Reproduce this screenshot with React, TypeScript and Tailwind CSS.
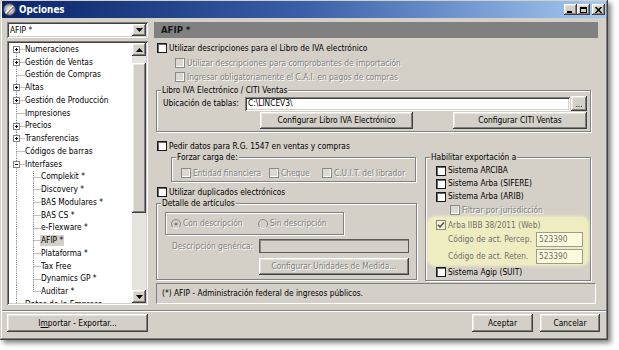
import clsx from 'clsx';
import type { ReactNode } from 'react';

const RAISED = 'shadow-[inset_-1px_-1px_#404040,inset_1px_1px_#ffffff,inset_-2px_-2px_#808080,inset_2px_2px_#e8e6e0]';
const SUNKEN = 'shadow-[inset_1px_1px_#808080,inset_-1px_-1px_#ffffff,inset_2px_2px_#404040,inset_-2px_-2px_#d4d0c8]';
const ETCHED = 'border border-[#808080] shadow-[inset_1px_1px_#ffffff,1px_1px_#ffffff]';
const DIS = 'text-[#808080] [text-shadow:1px_1px_0_#ffffff]';

const TREE: { t: string; l: number; b?: '+' | '-'; last?: boolean; sel?: boolean }[] = [
  { t: 'Numeraciones', l: 0, b: '+' },
  { t: 'Gestión de Ventas', l: 0, b: '+' },
  { t: 'Gestión de Compras', l: 0 },
  { t: 'Altas', l: 0, b: '+' },
  { t: 'Gestión de Producción', l: 0, b: '+' },
  { t: 'Impresiones', l: 0 },
  { t: 'Precios', l: 0, b: '+' },
  { t: 'Transferencias', l: 0, b: '+' },
  { t: 'Códigos de barras', l: 0 },
  { t: 'Interfases', l: 0, b: '-' },
  { t: 'Complekit *', l: 1 },
  { t: 'Discovery *', l: 1 },
  { t: 'BAS Modulares *', l: 1 },
  { t: 'BAS CS *', l: 1 },
  { t: 'e-Flexware *', l: 1 },
  { t: 'AFIP *', l: 1, sel: true },
  { t: 'Plataforma *', l: 1 },
  { t: 'Tax Free', l: 1 },
  { t: 'Dynamics GP *', l: 1 },
  { t: 'Auditar *', l: 1, last: true },
  { t: 'Datos de la Empresa', l: 0 },
];

const RH = 12.75;

function TreeCell({ cx, top, bottom, horiz, box }: { cx: number; top?: boolean; bottom?: boolean; horiz?: boolean; box?: '+' | '-' }) {
  const cy = 6.5;
  const dot = { stroke: '#808080', strokeWidth: 1, strokeDasharray: '1 1' };
  return (
    <svg width="16" height={RH} viewBox={`0 0 16 ${RH}`} className="shrink-0">
      {top && <line x1={cx} y1={0} x2={cx} y2={cy} {...dot} />}
      {bottom && <line x1={cx} y1={cy} x2={cx} y2={RH} {...dot} />}
      {horiz && <line x1={cx} y1={cy} x2={16} y2={cy} {...dot} />}
      {box && (
        <>
          <rect x={cx - 3} y={cy - 3} width={6} height={6} fill="#ffffff" stroke="#808080" />
          <line x1={cx - 1.5} y1={cy} x2={cx + 1.5} y2={cy} stroke="#000" />
          {box === '+' && <line x1={cx} y1={cy - 1.5} x2={cx} y2={cy + 1.5} stroke="#000" />}
        </>
      )}
    </svg>
  );
}

function Box({ disabled, checked, yellow }: { disabled?: boolean; checked?: boolean; yellow?: boolean }) {
  return (
    <span
      className={clsx(
        'w-[10px] h-[10px] shrink-0 flex items-center justify-center border',
        yellow
          ? 'border-[#8a8a80] bg-[#f4f3d6]'
          : disabled
            ? 'border-[#8a8a8a] bg-[#dcd9d2] shadow-[inset_-1px_-1px_#ffffff]'
            : 'border-[#1a1a1a] bg-white shadow-[inset_1px_1px_#6a6a6a]',
      )}
    >
      {checked && (
        <svg width="8" height="8" viewBox="0 0 8 8">
          <path d="M1 3.8 L3 6 L7 1.5" fill="none" stroke="#4a4a4a" strokeWidth="1.4" />
        </svg>
      )}
    </span>
  );
}

function Check({ label, disabled, checked, className, textClass, yellow }: { label: string; disabled?: boolean; checked?: boolean; className?: string; textClass?: string; yellow?: boolean }) {
  return (
    <div className={clsx('flex items-center', className)}>
      <Box disabled={disabled} checked={checked} yellow={yellow} />
      <span className={clsx('ml-[2px] whitespace-nowrap', textClass ?? (disabled ? DIS : 'text-black'))}>{label}</span>
    </div>
  );
}

function Radio({ label, on, className }: { label: string; on?: boolean; className?: string }) {
  return (
    <div className={clsx('flex items-center', className)}>
      <svg width="10" height="10" viewBox="0 0 10 10" className="shrink-0">
        <circle cx="5" cy="5" r="4.5" fill="#d4d0c8" stroke="#8a8a8a" />
        <path d="M1.8 8.2 A4.5 4.5 0 0 0 8.2 8.2" stroke="#ffffff" fill="none" />
        {on && <circle cx="5" cy="5" r="1.6" fill="#808080" />}
      </svg>
      <span className={clsx('ml-[2px] whitespace-nowrap', DIS)}>{label}</span>
    </div>
  );
}

function Btn({ children, className, disabled }: { children: ReactNode; className?: string; disabled?: boolean }) {
  return (
    <button type="button" className={clsx('flex items-center justify-center bg-[#d4d0c8] whitespace-nowrap', RAISED, disabled ? DIS : 'text-black', className)}>
      {children}
    </button>
  );
}

function Group({ label, className, children }: { label: string; className?: string; children?: ReactNode }) {
  return (
    <div className={clsx('relative box-border', ETCHED, className)}>
      <span className="absolute -top-[6px] left-[4px] px-[1px] bg-[#d4d0c8] leading-[11px] whitespace-nowrap text-black">{label}</span>
      {children}
    </div>
  );
}

function ScrollBtn({ up }: { up?: boolean }) {
  return (
    <div className={clsx('h-[13px] w-[14px] bg-[#d4d0c8] flex items-center justify-center shrink-0', RAISED)}>
      <svg width="7" height="4" viewBox="0 0 7 4">
        <path d={up ? 'M0 4 L3.5 0 L7 4 Z' : 'M0 0 L7 0 L3.5 4 Z'} fill="#000" />
      </svg>
    </div>
  );
}

function TitleBar() {
  return (
    <div className="h-[17px] bg-linear-to-r from-[#0a246a] via-[#3a5fa8] to-[#a6caf0] flex items-center pl-[1px] pr-[1px]">
      <svg width="13" height="13" viewBox="0 0 13 13" className="shrink-0">
        <circle cx="6.5" cy="6.5" r="5.8" fill="#a8a8a8" stroke="#4c4c4c" />
        <circle cx="6.5" cy="6.5" r="3.2" fill="#d8d8d8" />
        <path d="M2.5 10.5 L10 3" stroke="#ffffff" strokeWidth="1.6" />
        <path d="M3.5 11 L10.5 4" stroke="#3a3a3a" strokeWidth="0.8" />
      </svg>
      <span className="ml-[3px] text-white font-bold text-[9.8px]">Opciones</span>
      <div className="ml-auto flex items-center">
        <div className={clsx('w-[13px] h-[11px] bg-[#d4d0c8] flex items-end justify-start pl-[3px] pb-[2px]', RAISED)}>
          <span className="w-[5px] h-[2px] bg-black" />
        </div>
        <div className={clsx('w-[13px] h-[11px] bg-[#d4d0c8] flex items-center justify-center', RAISED)}>
          <span className="w-[7px] h-[6px] border border-black border-t-2" />
        </div>
        <div className={clsx('ml-[2px] w-[13px] h-[11px] bg-[#d4d0c8] flex items-center justify-center', RAISED)}>
          <svg width="7" height="6" viewBox="0 0 7 6">
            <path d="M0.5 0 L6.5 6 M6.5 0 L0.5 6" stroke="#000" strokeWidth="1.5" />
          </svg>
        </div>
      </div>
    </div>
  );
}

function LeftPane() {
  return (
    <div className="w-[141px] ml-[5px] flex flex-col shrink-0">
      <div className={clsx('h-[16px] bg-white flex items-center pl-[3px] pr-[2px]', SUNKEN)}>
        <span className="text-black">AFIP *</span>
        <div className={clsx('ml-auto w-[14px] h-[12px] bg-[#d4d0c8] flex items-center justify-center', RAISED)}>
          <svg width="7" height="4" viewBox="0 0 7 4">
            <path d="M0 0 L7 0 L3.5 4 Z" fill="#000" />
          </svg>
        </div>
      </div>
      <div className={clsx('mt-[3px] h-[264px] p-[2px] flex bg-white', SUNKEN)}>
        <div className="flex-1 overflow-hidden">
          {TREE.map((n, i) => (
            <div key={n.t} className="flex items-center" style={{ height: RH }}>
              {n.l === 0 ? (
                <TreeCell cx={7.5} top={i > 0} bottom horiz box={n.b} />
              ) : (
                <>
                  <TreeCell cx={7.5} top bottom />
                  <TreeCell cx={8.5} top bottom={!n.last} horiz />
                </>
              )}
              <span className={clsx('whitespace-nowrap text-black leading-[11px]', n.sel && 'bg-[#d4d0c8] px-[1px] -ml-[1px]')}>{n.t}</span>
            </div>
          ))}
        </div>
        <div className="w-[14px] flex flex-col bg-[#e6e4de]">
          <ScrollBtn up />
          <div className="flex-1">
            <div className={clsx('mt-[7px] h-[150px] bg-[#d4d0c8]', RAISED)} />
          </div>
          <ScrollBtn />
        </div>
      </div>
    </div>
  );
}

function RightPane() {
  const yText = 'text-[#707068]';
  return (
    <div className="w-[444px] ml-[6px] flex flex-col shrink-0">
      <div className="h-[16px] bg-[#808080] flex items-center pl-[7px]">
        <span className="font-bold text-[9.5px] text-[#161616]">AFIP *</span>
      </div>

      <Check className="mt-[3px] ml-[3px] h-[14px]" label="Utilizar descripciones para el Libro de IVA electrónico" />
      <Check className="mt-[1px] ml-[21px] h-[14px]" disabled label="Utilizar descripciones para comprobantes de importación" />
      <Check className="ml-[21px] h-[14px]" disabled label="Ingresar obligatoriamente el C.A.I. en pagos de compras" />

      <Group label="Libro IVA Electrónico / CITI Ventas" className="mt-[6px] ml-[2px] w-[435px] h-[42px] pt-[5px]">
        <div className="flex items-center h-[15px]">
          <span className="w-[88px] pl-[6px] shrink-0 whitespace-nowrap">Ubicación de tablas:</span>
          <div className={clsx('w-[325px] h-[14px] bg-white flex items-center pl-[3px]', SUNKEN)}>C:\LINCEV3\</div>
          <Btn className="ml-[1px] w-[16px] h-[15px] items-end pb-[3px]">...</Btn>
        </div>
        <div className="flex mt-[1px] h-[17px] pl-[103px]">
          <Btn className="w-[153px] h-[17px]">Configurar Libro IVA Electrónico</Btn>
          <Btn className="ml-[40px] w-[134px] h-[17px]">Configurar CITI Ventas</Btn>
        </div>
      </Group>

      <Check className="mt-[7px] ml-[3px] h-[14px]" label="Pedir datos para R.G. 1547 en ventas y compras" />

      <div className="flex mt-[4px] h-[124px]">
        <div className="w-[262px] ml-[2px] flex flex-col shrink-0">
          <Group label="Forzar carga de:" className="ml-[15px] w-[245px] h-[25px] pt-[8px] pl-[9px]">
            <div className="flex items-center h-[14px]">
              <Check className="w-[88px] shrink-0" disabled label="Entidad financiera" />
              <Check className="w-[53px] shrink-0" disabled label="Cheque" />
              <Check disabled label="C.U.I.T. del librador" />
            </div>
          </Group>
          <Check className="mt-[3px] ml-[1px] h-[14px]" label="Utilizar duplicados electrónicos" />
          <Group label="Detalle de artículos" className="mt-[4px] w-[261px] h-[77px]">
            <div className={clsx('mt-[8px] ml-[8px] w-[179px] h-[23px] flex items-center pl-[5px]', ETCHED)}>
              <Radio className="w-[87px] shrink-0" on label="Con descripción" />
              <Radio label="Sin descripción" />
            </div>
            <div className="flex items-center mt-[4px] h-[14px]">
              <span className={clsx('w-[102px] pl-[15px] shrink-0 whitespace-nowrap', DIS)}>Descripción genérica:</span>
              <div className="w-[150px] h-[14px] bg-[#d4d0c8] border border-[#5a5a5a] shadow-[inset_1px_1px_#8a8a8a]" />
            </div>
            <Btn disabled className="mt-[5px] ml-[102px] w-[150px] h-[17px]">Configurar Unidades de Medida...</Btn>
          </Group>
        </div>

        <Group label="Habilitar exportación a" className="ml-[7px] w-[166px] h-[124px] pt-[6px]">
          <Check className="h-[13px] pl-[10px]" label="Sistema ARCIBA" />
          <Check className="h-[13px] pl-[10px]" label="Sistema Arba (SIFERE)" />
          <Check className="h-[13px] pl-[10px]" label="Sistema Arba (ARIB)" />
          <Check className="h-[14px] pl-[24px]" disabled label="Filtrar por jurisdicción" />
          <div className="ml-[2px] w-[160px] h-[48px] rounded-[7px] bg-[#eeedc2] shadow-[0_0_3px_1px_#eeedc2] pt-[1px]">
            <Check className="h-[14px] pl-[8px]" yellow checked label="Arba IIBB 38/2011 (Web)" textClass={yText} />
            <div className="flex items-center h-[15px]">
              <span className={clsx('w-[108px] pl-[20px] shrink-0 whitespace-nowrap', yText)}>Código de act. Percep.</span>
              <div className="w-[47px] h-[15px] bg-[#fbfadc] border border-[#9c9c90] flex items-center pl-[2px] text-[#707068]">523390</div>
            </div>
            <div className="flex items-center h-[15px] mt-[2px]">
              <span className={clsx('w-[108px] pl-[20px] shrink-0 whitespace-nowrap', yText)}>Código de act. Reten.</span>
              <div className="w-[47px] h-[15px] bg-[#fbfadc] border border-[#9c9c90] flex items-center pl-[2px] text-[#707068]">523390</div>
            </div>
          </div>
          <Check className="h-[14px] pl-[10px]" label="Sistema Agip (SUIT)" />
        </Group>
      </div>

      <div className="mt-[2px] ml-[2px] w-[440px] h-[21px] flex items-center pl-[5px] border border-[#808080] border-r-white border-b-white text-black">
        (*) AFIP - Administración federal de ingresos públicos.
      </div>
    </div>
  );
}

export default function App() {
  return (
    <div className="w-[619px] h-[350px] bg-white overflow-hidden font-['DejaVu_Sans_Condensed','DejaVu_Sans',sans-serif] [font-stretch:condensed] text-[8.3px] leading-none text-black">
      <div className="w-[608px] h-[340px] bg-[#d4d0c8] flex flex-col px-[2px] pt-[1px] shadow-[inset_-1px_-1px_#404040,inset_1px_1px_#d4d0c8,inset_-2px_-2px_#808080,inset_2px_2px_#ffffff,3px_3px_5px_rgba(0,0,0,0.5)]">
        <TitleBar />
        <div className="flex mt-[4px] h-[283px]">
          <LeftPane />
          <RightPane />
        </div>
        <div className="mt-[5px] h-[2px] border-t border-[#808080] border-b border-b-white" />
        <div className="flex mt-[2px] h-[18px]">
          <Btn className="ml-[5px] w-[141px] h-[18px]">
            <span>I<span className="underline">m</span>portar - Exportar...</span>
          </Btn>
          <Btn className="ml-auto w-[61px] h-[18px]">Aceptar</Btn>
          <Btn className="ml-[7px] mr-[6px] w-[60px] h-[18px]">Cancelar</Btn>
        </div>
      </div>
    </div>
  );
}
